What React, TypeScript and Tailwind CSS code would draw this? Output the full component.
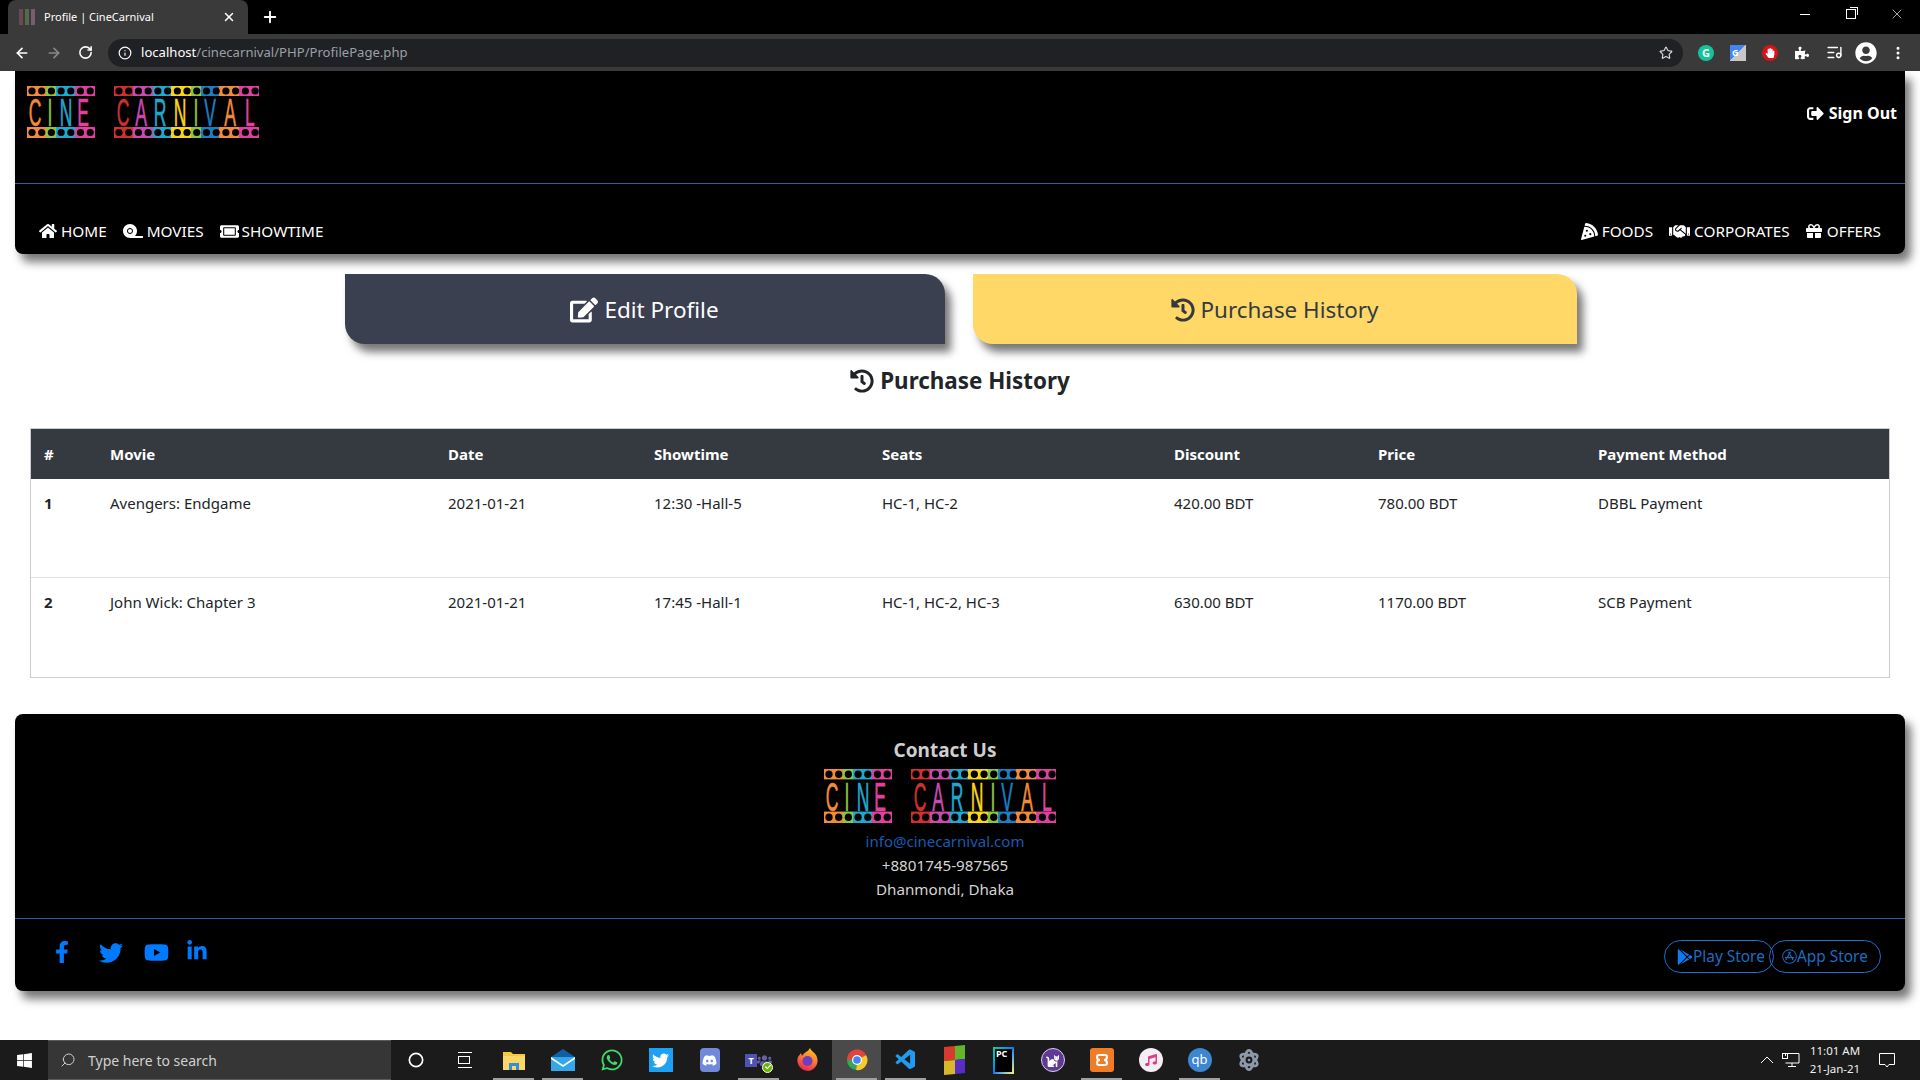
import React from 'react';
import {
  ArrowLeft,
  ArrowRight,
  RotateCw,
  Info,
  Star,
  ListMusic,
  EllipsisVertical,
  X,
  Plus,
  Search,
  Circle,
} from 'lucide-react';
import {
  FaHome,
  FaTape,
  FaTicketAlt,
  FaPizzaSlice,
  FaHandshake,
  FaGift,
  FaSignOutAlt,
  FaEdit,
  FaHistory,
  FaFacebookF,
  FaTwitter,
  FaYoutube,
  FaLinkedinIn,
  FaGooglePlay,
  FaAppStore,
  FaPuzzlePiece,
  FaUserCircle,
  FaHandPaper,
  FaWindows,
  FaWhatsapp,
  FaDiscord,
  FaCat,
  FaMusic,
  FaAtom,
  FaUsers,
  FaCheck,
} from 'react-icons/fa';
import { VscVscode } from 'react-icons/vsc';

const ORANGE = '#f28c38';
const GREEN = '#8cc63f';
const CYAN = '#1fa9cf';
const PINK = '#e040a0';
const RED = '#d03030';
const PURPLE = '#c84bb0';
const YELLOW = '#f9d616';
const BLUE = '#1b7fc4';

const STRIPS = [
  { x: 0, w: 19, c: ORANGE },
  { x: 19, w: 10, c: GREEN },
  { x: 29, w: 19, c: CYAN },
  { x: 48, w: 20, c: PINK },
  { x: 87, w: 19, c: RED },
  { x: 106, w: 20, c: PURPLE },
  { x: 126, w: 18, c: CYAN },
  { x: 144, w: 20, c: YELLOW },
  { x: 164, w: 10, c: GREEN },
  { x: 174, w: 18, c: BLUE },
  { x: 192, w: 20, c: ORANGE },
  { x: 212, w: 20, c: PINK },
];

const LETTERS = [
  { t: 'C', x: 8, c: ORANGE },
  { t: 'I', x: 23, c: GREEN },
  { t: 'N', x: 39, c: CYAN },
  { t: 'E', x: 56, c: PINK },
  { t: 'C', x: 96, c: RED },
  { t: 'A', x: 114, c: PURPLE },
  { t: 'R', x: 133, c: CYAN },
  { t: 'N', x: 153, c: YELLOW },
  { t: 'I', x: 169, c: GREEN },
  { t: 'V', x: 183, c: BLUE },
  { t: 'A', x: 203, c: ORANGE },
  { t: 'L', x: 223, c: PINK },
];

function Holes({ y }: { y: number }) {
  const first = Array.from({ length: 7 }, (_, i) => 5 + i * 9.7);
  const second = Array.from({ length: 15 }, (_, i) => 92 + i * 9.72);
  return (
    <>
      {[...first, ...second].map((cx) => (
        <circle key={cx} cx={cx} cy={y} r={3.6} fill="#000" />
      ))}
    </>
  );
}

function Logo({ height = 52 }: { height?: number }) {
  return (
    <svg width={233} height={height} viewBox="0 0 233 52" preserveAspectRatio="none">
      {STRIPS.map((s) => (
        <g key={s.x} fill={s.c}>
          <rect x={s.x} y={0} width={s.w} height={10} />
          <rect x={s.x} y={41} width={s.w} height={11} />
        </g>
      ))}
      <Holes y={5} />
      <Holes y={46.5} />
      {LETTERS.map((l) => (
        <text
          key={l.x}
          transform={`translate(${l.x} 40) scale(0.45 1)`}
          textAnchor="middle"
          fontFamily="'Liberation Sans', sans-serif"
          fontSize={39}
          fill={l.c}
          stroke={l.c}
          strokeWidth={0.6}
        >
          {l.t}
        </text>
      ))}
    </svg>
  );
}

function ChromeBar() {
  return (
    <div className="shrink-0">
      <div className="h-[34px] bg-black flex items-end relative">
        <div className="ml-2 w-[240px] h-[34px] bg-[#3a3a3a] rounded-t-lg flex items-center pl-[11px] pr-[12px] text-white">
          <div className="flex gap-[2px] w-[16px] h-[16px] mr-[9px]">
            <span className="w-[4px] h-full bg-[#6a4a52]" />
            <span className="w-[4px] h-full bg-[#55694c]" />
            <span className="w-[4px] h-full bg-[#7a5c70]" />
          </div>
          <span className="text-[11px] flex-1">Profile | CineCarnival</span>
          <X size={14} strokeWidth={2.5} />
        </div>
        <div className="ml-[13px] h-[34px] flex items-center text-white">
          <Plus size={18} strokeWidth={2.5} />
        </div>
        <div className="ml-auto h-[28px] self-start flex items-center text-white">
          <div className="w-[46px] flex justify-center"><span className="w-[10px] h-px bg-white" /></div>
          <div className="w-[46px] flex justify-center">
            <div className="relative w-[10px] h-[10px] border border-white">
              <span className="absolute -top-[3px] -right-[3px] w-[8px] h-[8px] border-t border-r border-white" />
            </div>
          </div>
          <div className="w-[46px] flex justify-center"><X size={16} strokeWidth={1} /></div>
        </div>
      </div>
      <div className="h-[37px] bg-[#3a3a3a] flex items-center text-white">
        <div className="w-[108px] flex items-center pl-[14px] gap-[16px]">
          <ArrowLeft size={16} strokeWidth={2.5} />
          <ArrowRight size={16} strokeWidth={2.5} className="text-[#8a8a8a]" />
          <RotateCw size={15} strokeWidth={2.5} />
        </div>
        <div className="w-[1575px] h-[28px] bg-[#202124] rounded-full flex items-center pl-[10px]">
          <Info size={14} />
          <span className="ml-[9px] text-[13.1px] flex-1">
            localhost<span className="text-[#9aa0a6]">/cinecarnival/PHP/ProfilePage.php</span>
          </span>
          <Star size={14} strokeWidth={2} className="text-[#d8d8d8] mr-[10px]" />
        </div>
        <div className="flex-1 flex items-center pl-[7px]">
          <div className="w-[32px] flex justify-center">
            <span className="w-[16px] h-[16px] rounded-full bg-[#15c39a] text-white text-[11px] leading-[16px] text-center font-bold">G</span>
          </div>
          <div className="w-[32px] flex justify-center">
            <span className="w-[16px] h-[16px] bg-gradient-to-br from-[#4285f4] from-50% to-[#c8c8c8] to-50% text-white text-[9px] leading-[16px] pl-[2px] font-bold">G</span>
          </div>
          <div className="w-[32px] flex justify-center">
            <span className="w-[16px] h-[16px] rounded-full bg-[#d8121a] flex items-center justify-center">
              <FaHandPaper size={10} className="text-white" />
            </span>
          </div>
          <div className="w-[32px] flex justify-center"><FaPuzzlePiece size={14} /></div>
          <div className="w-[32px] flex justify-center"><ListMusic size={17} /></div>
          <div className="w-[32px] flex justify-center"><FaUserCircle size={22} /></div>
          <div className="w-[32px] flex justify-center"><EllipsisVertical size={16} strokeWidth={2.5} /></div>
        </div>
      </div>
    </div>
  );
}

function NavItem({ icon, label, gap }: { icon: React.ReactNode; label: string; gap: string }) {
  return (
    <a className={`flex items-center text-white text-[15.3px] ${gap}`}>
      {icon}
      <span>{label}</span>
    </a>
  );
}

function Header() {
  return (
    <header className="mx-[15px] bg-black rounded-b-lg shadow-[6px_8px_10px_#777]">
      <div className="h-[112px] flex justify-between items-start pl-[12px] pr-[8px] pt-[15px]">
        <Logo />
        <a className="flex items-center gap-[5px] text-white font-bold text-[16px] mt-[15px]">
          <FaSignOutAlt size={17} />
          Sign Out
        </a>
      </div>
      <div className="h-px bg-[#2a5db0]" />
      <nav className="h-[70px] flex justify-between items-start pt-[36px] px-[24px]">
        <div className="flex gap-4">
          <NavItem icon={<FaHome size={18} />} label="HOME" gap="gap-1" />
          <NavItem icon={<FaTape size={20} />} label="MOVIES" gap="gap-1" />
          <NavItem icon={<FaTicketAlt size={19} />} label="SHOWTIME" gap="gap-[3px]" />
        </div>
        <div className="flex gap-4">
          <NavItem icon={<FaPizzaSlice size={17} />} label="FOODS" gap="gap-1" />
          <NavItem icon={<FaHandshake size={21} />} label="CORPORATES" gap="gap-1" />
          <NavItem icon={<FaGift size={16} />} label="OFFERS" gap="gap-[5px]" />
        </div>
      </nav>
    </header>
  );
}

const ROWS = [
  ['1', 'Avengers: Endgame', '2021-01-21', '12:30 -Hall-5', 'HC-1, HC-2', '420.00 BDT', '780.00 BDT', 'DBBL Payment'],
  ['2', 'John Wick: Chapter 3', '2021-01-21', '17:45 -Hall-1', 'HC-1, HC-2, HC-3', '630.00 BDT', '1170.00 BDT', 'SCB Payment'],
];

function History() {
  return (
    <main className="flex-1 min-h-0">
      <div className="flex justify-center gap-[28px] mt-[20px] pl-[1px]">
        <button className="w-[600px] h-[70px] pt-[2px] bg-[#3b4050] text-white text-[22.5px] rounded-tr-[20px] rounded-bl-[20px] shadow-[6px_8px_8px_#777] flex items-center justify-center gap-[6px]">
          <FaEdit size={28} />
          Edit Profile
        </button>
        <button className="w-[604px] h-[70px] pt-[2px] bg-[#ffd868] text-[#343a40] text-[22.4px] rounded-tr-[20px] rounded-bl-[20px] shadow-[6px_8px_8px_#777] flex items-center justify-center gap-[6px]">
          <FaHistory size={24} />
          Purchase History
        </button>
      </div>
      <h2 className="mt-[20px] h-[34px] flex items-center justify-center gap-[6px] text-[22.4px] font-bold text-[#212529]">
        <FaHistory size={24} />
        Purchase History
      </h2>
      <div className="mx-[30px] mt-[30px] border border-[#c9ccd0]">
        <table className="w-full table-fixed text-left text-[15px] text-[#212529] border-collapse">
          <thead>
            <tr className="h-[50px] bg-[#343a40] text-white">
              <th className="w-[67px] pl-[13px] font-bold">#</th>
              <th className="w-[338px] px-3 font-bold">Movie</th>
              <th className="w-[206px] px-3 font-bold">Date</th>
              <th className="w-[228px] px-3 font-bold">Showtime</th>
              <th className="w-[292px] px-3 font-bold">Seats</th>
              <th className="w-[204px] px-3 font-bold">Discount</th>
              <th className="w-[220px] px-3 font-bold">Price</th>
              <th className="px-3 font-bold">Payment Method</th>
            </tr>
          </thead>
          <tbody>
            {ROWS.map((row, i) => (
              <tr key={row[0]} className={i === 0 ? 'h-[98px] border-b border-[#dee2e6]' : 'h-[100px]'}>
                {row.map((cell, j) => (
                  <td key={j} className={j === 0 ? 'pl-[13px] pt-[13px] align-top font-bold' : 'px-3 pt-[13px] align-top'}>
                    {cell}
                  </td>
                ))}
              </tr>
            ))}
          </tbody>
        </table>
      </div>
      <Footer />
    </main>
  );
}

function Footer() {
  return (
    <footer className="mx-[15px] mt-[36px] bg-black rounded-lg shadow-[6px_8px_10px_#777]">
      <div className="h-[204px] pr-[30px] pt-[21px] flex flex-col items-center text-[#d4d4d4] text-[15.2px] leading-[24px]">
        <h3 className="text-[19px] font-bold text-[#cfcfcf] leading-[30px]">Contact Us</h3>
        <div className="mt-[4px] mb-[6px] mr-[10px] h-[54px]">
          <Logo height={54} />
        </div>
        <a className="text-[#1a5ab0] text-[15px]">info@cinecarnival.com</a>
        <span>+8801745-987565</span>
        <span>Dhanmondi, Dhaka</span>
      </div>
      <div className="h-px bg-[#2a5db0]" />
      <div className="h-[72px] flex justify-between pl-[36px] pr-[24px] pt-[21px]">
        <div className="flex items-start text-[#007bff] h-[24px]">
          <FaFacebookF size={22} className="mt-[1px]" />
          <FaTwitter size={24} className="ml-[26px] mt-[1px]" />
          <FaYoutube size={25} className="ml-[21px]" />
          <FaLinkedinIn size={22} className="ml-[17px]" />
        </div>
        <div className="flex text-[#1b6ec2] text-[15.4px]">
          <a className="h-[33px] w-[110px] border border-[#1f6fd0] rounded-full flex items-center pl-[12px] -mr-[5px]">
            <FaGooglePlay size={16} className="text-[#0f7bef]" />
            Play Store
          </a>
          <a className="h-[33px] w-[112px] border border-[#1f6fd0] rounded-full flex items-center pl-[12px]">
            <FaAppStore size={15} />
            App Store
          </a>
        </div>
      </div>
    </footer>
  );
}

function TaskIcon({ children, open, active }: { children: React.ReactNode; open?: boolean; active?: boolean }) {
  return (
    <div className={active ? 'relative w-[49px] h-full flex items-center justify-center bg-[#4a4a4a]' : 'relative w-[49px] h-full flex items-center justify-center'}>
      {children}
      {open && <span className="absolute bottom-0 left-[4px] right-[4px] h-[2px] bg-[#a0a0a0]" />}
    </div>
  );
}

function Taskbar() {
  return (
    <div className="shrink-0 h-[40px] bg-[#1b1b1b] flex items-center text-white">
      <div className="w-[48px] flex justify-center"><FaWindows size={17} /></div>
      <div className="w-[343px] h-full bg-[#363636] border-y border-[#5a5a5a] flex items-center pl-[12px] gap-[12px] text-[#d0d0d0] text-[14px]">
        <Search size={16} strokeWidth={1.5} className="-scale-x-100" />
        Type here to search
      </div>
      <TaskIcon><Circle size={16} strokeWidth={2.5} /></TaskIcon>
      <TaskIcon>
        <div className="w-[14px] h-[16px] border-y border-white flex items-center">
          <span className="w-[12px] h-[8px] border border-white" />
        </div>
      </TaskIcon>
      <TaskIcon open>
        <svg width="24" height="24" viewBox="0 0 24 24">
          <path d="M1 4 H9 L11 6 H23 V22 H1 Z" fill="#f8c83c" />
          <rect x="1" y="8" width="22" height="14" fill="#fbd768" />
          <path d="M7 22 V15 H17 V22 H14 V18 H10 V22 Z" fill="#2f8fd8" />
        </svg>
      </TaskIcon>
      <TaskIcon open>
        <svg width="26" height="24" viewBox="0 0 26 24">
          <path d="M1 9 L13 1 L25 9 L13 16 Z" fill="#0f5fa8" />
          <rect x="1" y="9" width="24" height="14" fill="#35a6ea" />
          <path d="M1 9 L13 17 L25 9 V11 L13 19 L1 11 Z" fill="#fff" />
        </svg>
      </TaskIcon>
      <TaskIcon><FaWhatsapp size={24} className="text-[#3ddc6e]" /></TaskIcon>
      <TaskIcon><span className="w-[24px] h-[24px] bg-[#1da1f2] flex items-center justify-center"><FaTwitter size={17} /></span></TaskIcon>
      <TaskIcon><span className="w-[20px] h-[24px] rounded-[4px] bg-[#7289da] flex items-center justify-center"><FaDiscord size={15} /></span></TaskIcon>
      <TaskIcon open>
        <span className="relative flex items-center text-[#6264a7]">
          <span className="w-[12px] h-[13px] bg-[#4f52b2] text-white text-[9px] leading-[13px] text-center font-bold">T</span>
          <FaUsers size={15} />
          <span className="absolute -bottom-[5px] -right-[1px] w-[11px] h-[11px] rounded-full bg-[#6bb700] border border-white flex items-center justify-center"><FaCheck size={6} className="text-white" /></span>
        </span>
      </TaskIcon>
      <TaskIcon>
        <svg width="24" height="24" viewBox="0 0 24 24">
          <defs>
            <linearGradient id="fx" x1="0.7" y1="0" x2="0.3" y2="1">
              <stop offset="0" stopColor="#ffc61e" />
              <stop offset="0.5" stopColor="#ff7139" />
              <stop offset="1" stopColor="#e3254f" />
            </linearGradient>
          </defs>
          <path d="M12 23 A10.5 10.5 0 0 1 2 9 L5 5 L6 8 C8 4 12 4 14 0 C15 3 18 4 20 7 A10.5 10.5 0 0 1 12 23 Z" fill="url(#fx)" />
          <circle cx="11.5" cy="13" r="5" fill="#6b3fc0" />
        </svg>
      </TaskIcon>
      <TaskIcon open active>
        <svg width="24" height="24" viewBox="0 0 24 24">
          <path d="M12 12 L2 12 A10 10 0 0 1 21 7 Z" fill="#e0443a" />
          <path d="M12 12 L21 7 A10 10 0 0 1 11 22 Z" fill="#f9c92a" />
          <path d="M12 12 L11 22 A10 10 0 0 1 2 12 Z" fill="#34a853" />
          <circle cx="12" cy="12" r="5" fill="#fff" />
          <circle cx="12" cy="12" r="3.8" fill="#4285f4" />
        </svg>
      </TaskIcon>
      <TaskIcon open><VscVscode size={24} className="text-[#1f9cf0]" /></TaskIcon>
      <TaskIcon>
        <div className="w-[21px] h-[28px] grid grid-cols-2 -skew-y-6">
          <span className="bg-[#d83b2b]" />
          <span className="bg-[#63b52b]" />
          <span className="bg-[#d8b82b]" />
          <span className="bg-[#5a2bc8]" />
        </div>
      </TaskIcon>
      <TaskIcon>
        <div className="w-[21px] h-[27px] bg-gradient-to-br from-[#21d789] via-[#087cfa] to-[#fcf84a] p-[2px]">
          <div className="w-full h-full bg-black text-white text-[9px] font-bold leading-[10px] pl-[1px]">PC</div>
        </div>
      </TaskIcon>
      <TaskIcon>
        <span className="w-[24px] h-[24px] rounded-full bg-[#5e3a96] border border-[#d8d0e8] flex items-center justify-center"><FaCat size={13} /></span>
      </TaskIcon>
      <TaskIcon open>
        <span className="w-[24px] h-[24px] rounded-[3px] bg-[#f07c28] flex items-center justify-center">
          <svg width="16" height="16" viewBox="0 0 16 16" fill="none" stroke="#fff" strokeWidth="2">
            <path d="M5 3 H11 M5 13 H11 M5 3 A2 2 0 0 0 3 5 A3 3 0 0 0 6 8 A3 3 0 0 0 3 11 A2 2 0 0 0 5 13 M11 3 A2 2 0 0 1 13 5 A3 3 0 0 1 10 8 A3 3 0 0 1 13 11 A2 2 0 0 1 11 13" />
          </svg>
        </span>
      </TaskIcon>
      <TaskIcon>
        <span className="w-[24px] h-[24px] rounded-full bg-[#f4eef4] flex items-center justify-center"><FaMusic size={12} className="text-[#d8408a]" /></span>
      </TaskIcon>
      <TaskIcon open>
        <span className="w-[24px] h-[24px] rounded-full bg-[#3c87d0] text-white text-[13px] leading-[22px] text-center">qb</span>
      </TaskIcon>
      <TaskIcon><FaAtom size={22} className="text-[#8d98a8]" /></TaskIcon>
      <div className="ml-auto flex items-center h-full">
        <svg width="14" height="14" viewBox="0 0 14 14" fill="none" stroke="#fff" className="mr-[8px]"><path d="M1 10 L7 4 L13 10" /></svg>
        <svg width="18" height="16" viewBox="0 0 18 16" fill="none" stroke="#fff" className="mr-[2px]">
          <path d="M3.5 4 V1.5 H17 V11 H3.5 M10 11 V14 M6 14.5 H14" />
          <rect x="0.5" y="1.5" width="5" height="5" />
        </svg>
        <div className="w-[66px] text-center text-[11.5px] leading-[18px] text-[#f0f0f0]">
          <div>11:01 AM</div>
          <div>21-Jan-21</div>
        </div>
        <svg width="18" height="18" viewBox="0 0 18 18" fill="none" stroke="#fff" className="ml-[10px] mr-[24px]">
          <path d="M1.5 2.5 H16.5 V13.5 H11 L9 16 L7 13.5 H1.5 Z" />
        </svg>
      </div>
    </div>
  );
}

export default function App() {
  return (
    <div className="h-screen w-full overflow-hidden bg-white flex flex-col font-['Noto_Sans',sans-serif]">
      <ChromeBar />
      <Header />
      <History />
      <Taskbar />
    </div>
  );
}
